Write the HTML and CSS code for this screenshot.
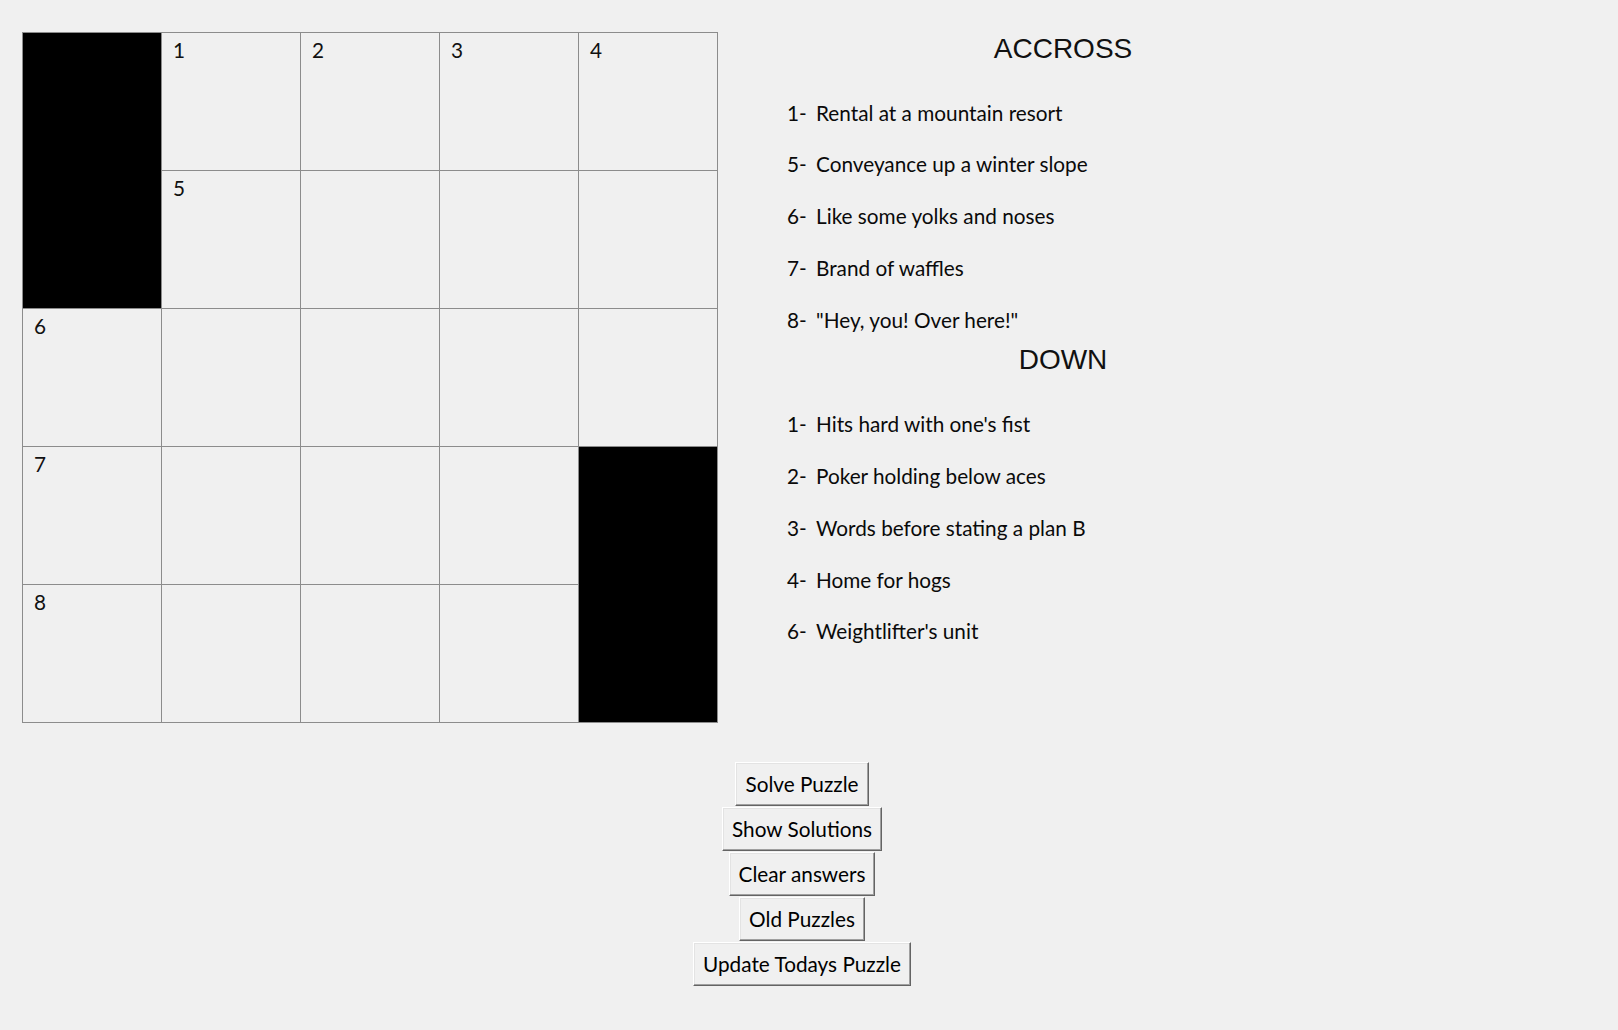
FILE: index.html
```html
<!DOCTYPE html>
<html lang="en">
<head>
<meta charset="utf-8">
<title>Crossword</title>
<link rel="stylesheet" href="styles.css">
</head>
<body>
<div class="app">
  <div class="top">
    <div class="board">
      <div class="cell black b-top"></div>
      <div class="cell"><span class="n">1</span></div>
      <div class="cell"><span class="n">2</span></div>
      <div class="cell"><span class="n">3</span></div>
      <div class="cell"><span class="n">4</span></div>
      <div class="cell"><span class="n">5</span></div>
      <div class="cell"></div>
      <div class="cell"></div>
      <div class="cell"></div>
      <div class="cell"><span class="n">6</span></div>
      <div class="cell"></div>
      <div class="cell"></div>
      <div class="cell"></div>
      <div class="cell"></div>
      <div class="cell black b-bottom"></div>
      <div class="cell"><span class="n">7</span></div>
      <div class="cell"></div>
      <div class="cell"></div>
      <div class="cell"></div>
      <div class="cell"><span class="n">8</span></div>
      <div class="cell"></div>
      <div class="cell"></div>
      <div class="cell"></div>
    </div>
    <div class="clues">
      <h2 class="heading">ACCROSS</h2>
      <ul class="list">
        <li><span class="num">1-</span>Rental at a mountain resort</li>
        <li><span class="num">5-</span>Conveyance up a winter slope</li>
        <li><span class="num">6-</span>Like some yolks and noses</li>
        <li><span class="num">7-</span>Brand of waffles</li>
        <li><span class="num">8-</span>"Hey, you! Over here!"</li>
      </ul>
      <h2 class="heading down">DOWN</h2>
      <ul class="list">
        <li><span class="num">1-</span>Hits hard with one's fist</li>
        <li><span class="num">2-</span>Poker holding below aces</li>
        <li><span class="num">3-</span>Words before stating a plan B</li>
        <li><span class="num">4-</span>Home for hogs</li>
        <li><span class="num">6-</span>Weightlifter's unit</li>
      </ul>
    </div>
  </div>
  <div class="buttons">
    <button class="btn">Solve Puzzle</button>
    <button class="btn">Show Solutions</button>
    <button class="btn">Clear answers</button>
    <button class="btn">Old Puzzles</button>
    <button class="btn">Update Todays Puzzle</button>
  </div>
</div>
</body>
</html>
```
FILE: styles.css
```css
html, body {
  margin: 0;
  padding: 0;
  background: #f0f0f0;
}

body {
  font-family: Lato, "Open Sans", "Noto Sans", sans-serif;
  font-size: 20.75px;
  color: #000;
}

.app {
  width: 1618px;
  height: 1030px;
  display: flex;
  flex-direction: column;
}

.top {
  display: flex;
  align-items: flex-start;
}

.board {
  margin: 32px 0 0 22px;
  display: grid;
  grid-template-columns: repeat(5, 138px);
  grid-template-rows: repeat(5, 137px);
  gap: 1px;
  padding: 1px;
  background: #8c8c8c;
}

.cell {
  background: #f0f0f0;
  padding: 4px 11px;
  line-height: 26px;
  box-sizing: border-box;
}

.cell.black {
  background: #000;
}

.b-top {
  grid-column: 1;
  grid-row: 1 / span 2;
}

.b-bottom {
  grid-column: 5;
  grid-row: 4 / span 2;
}

.n {
  font-size: 20.75px;
  color: #111;
}

.clues {
  width: 690px;
  padding-top: 33px;
  display: flex;
  flex-direction: column;
}

.heading {
  margin: 0 0 34.5px 0;
  font-family: "Liberation Sans", Arial, sans-serif;
  font-weight: normal;
  font-size: 28px;
  line-height: 32px;
  text-align: center;
  color: #111;
}

.heading.down {
  margin-top: 11px;
  margin-bottom: 35.5px;
}

.list {
  list-style: none;
  margin: 0;
  padding: 0 0 0 69px;
  display: flex;
  flex-direction: column;
  gap: 25.8px;
}

.list li {
  line-height: 26px;
  white-space: nowrap;
  color: #0a0a0a;
}

.num {
  display: inline-block;
  width: 29px;
}

.buttons {
  margin-top: 39px;
  padding-right: 14px;
  display: flex;
  flex-direction: column;
  align-items: center;
  gap: 1px;
}

.btn {
  font-family: Lato, "Open Sans", "Noto Sans", sans-serif;
  font-size: 20.75px;
  line-height: 26px;
  height: 44px;
  padding: 0 9px;
  color: #000;
  background: #f0f0f0;
  border: 1px solid;
  border-color: #ffffff #646464 #646464 #ffffff;
  box-shadow: inset -1px -1px 0 #a0a0a0, inset 1px 1px 0 #e3e3e3;
  border-radius: 0;
  cursor: default;
}
```
